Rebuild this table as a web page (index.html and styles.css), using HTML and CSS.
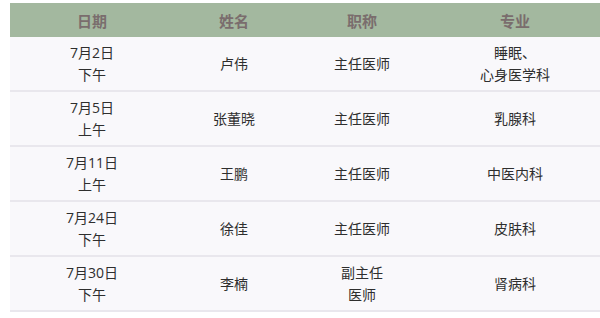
FILE: index.html
```html
<!DOCTYPE html>
<html lang="zh">
<head>
<meta charset="utf-8">
<link rel="stylesheet" href="styles.css">
</head>
<body>
<table class="schedule">
  <thead>
    <tr><th class="c-date">日期</th><th class="c-name">姓名</th><th class="c-title">职称</th><th class="c-dept">专业</th></tr>
  </thead>
  <tbody>
    <tr><td>7月2日<br>下午</td><td>卢伟</td><td>主任医师</td><td>睡眠、<br>心身医学科</td></tr>
    <tr><td>7月5日<br>上午</td><td>张董晓</td><td>主任医师</td><td>乳腺科</td></tr>
    <tr><td>7月11日<br>上午</td><td>王鹏</td><td>主任医师</td><td>中医内科</td></tr>
    <tr><td>7月24日<br>下午</td><td>徐佳</td><td>主任医师</td><td>皮肤科</td></tr>
    <tr><td>7月30日<br>下午</td><td>李楠</td><td>副主任<br>医师</td><td>肾病科</td></tr>
  </tbody>
</table>
</body>
</html>
```
FILE: styles.css
```css
html, body {
  margin: 0;
  padding: 0;
  background: #ffffff;
}
body {
  padding: 3px 0 0 10px;
  font-family: "Open Sans", "Noto Sans CJK SC", sans-serif;
  font-size: 14px;
  color: #2e2e2e;
}
.schedule {
  width: 590px;
  border-collapse: collapse;
  table-layout: fixed;
}
.schedule th {
  background: #a3b89f;
  color: #7a6d6d;
  font-weight: bold;
  font-size: 15px;
  height: 34px;
  padding: 0;
  text-align: center;
}
.c-date { width: 164px; }
.c-name { width: 120px; }
.c-title { width: 136px; }
.c-dept { width: 170px; }
.schedule td {
  background: #f9f8fb;
  border-bottom: 2px solid #e9e7ed;
  text-align: center;
  vertical-align: middle;
  line-height: 22px;
  height: 53px;
  padding: 0;
}
```
